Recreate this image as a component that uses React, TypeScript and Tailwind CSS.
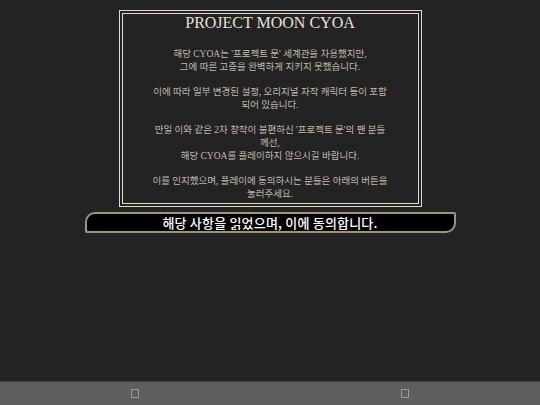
export default function App() {
  const body = "font-['Liberation_Serif','Noto_Sans_CJK_KR',serif]";

  return (
    <div className="h-screen flex flex-col bg-[#232323] overflow-hidden">
      <main className="flex-1 flex flex-col items-center">
        {/* notice box */}
        <section className="mt-[10px] w-[303px] h-[197px] border-[4px] border-double border-[#e2dacb] flex flex-col items-center">
          <h1 className={`${body} text-[16px] leading-[16px] text-[#e8e2d8] mt-[1px]`}>
            PROJECT MOON CYOA
          </h1>
          <div className={`${body} mt-[17px] text-[9.5px] leading-[12.7px] text-[#c2bab0] text-center whitespace-nowrap`}>
            <p>
              해당 CYOA는 '프로젝트 문' 세계관을 차용했지만,
              <br />
              그에 따른 고증을 완벽하게 지키지 못했습니다.
            </p>
            <br />
            <p>
              이에 따라 일부 변경된 설정, 오리지널 자작 캐릭터 등이 포함
              <br />
              되어 있습니다.
            </p>
            <br />
            <p>
              만일 이와 같은 2차 창작이 불편하신 '프로젝트 문'의 팬 분들
              <br />
              께선,
              <br />
              해당 CYOA를 플레이하지 않으시길 바랍니다.
            </p>
            <br />
            <p>
              이를 인지했으며, 플레이에 동의하시는 분들은 아래의 버튼을
              <br />
              눌러주세요.
            </p>
          </div>
        </section>

        {/* agree button */}
        <button className="mt-[5px] w-[371px] h-[21px] bg-black border-2 border-[#a39475] rounded-tl-[10px] rounded-br-[10px] rounded-tr-[2px] rounded-bl-[2px] flex items-center justify-center">
          <span className="font-['Noto_Sans_CJK_KR',sans-serif] font-medium text-[13px] leading-[16px] tracking-[0.2px] text-white">
            해당 사항을 읽었으며, 이에 동의합니다.
          </span>
        </button>
      </main>

      {/* bottom bar */}
      <footer className="h-[24px] bg-[#5e5e5e] border-t border-[#434343] grid grid-cols-2">
        <div className="flex items-center justify-center">
          <span className="w-[8px] h-[9px] border border-[#9c9c9c]" />
        </div>
        <div className="flex items-center justify-center">
          <span className="w-[8px] h-[9px] border border-[#9c9c9c]" />
        </div>
      </footer>
    </div>
  );
}
